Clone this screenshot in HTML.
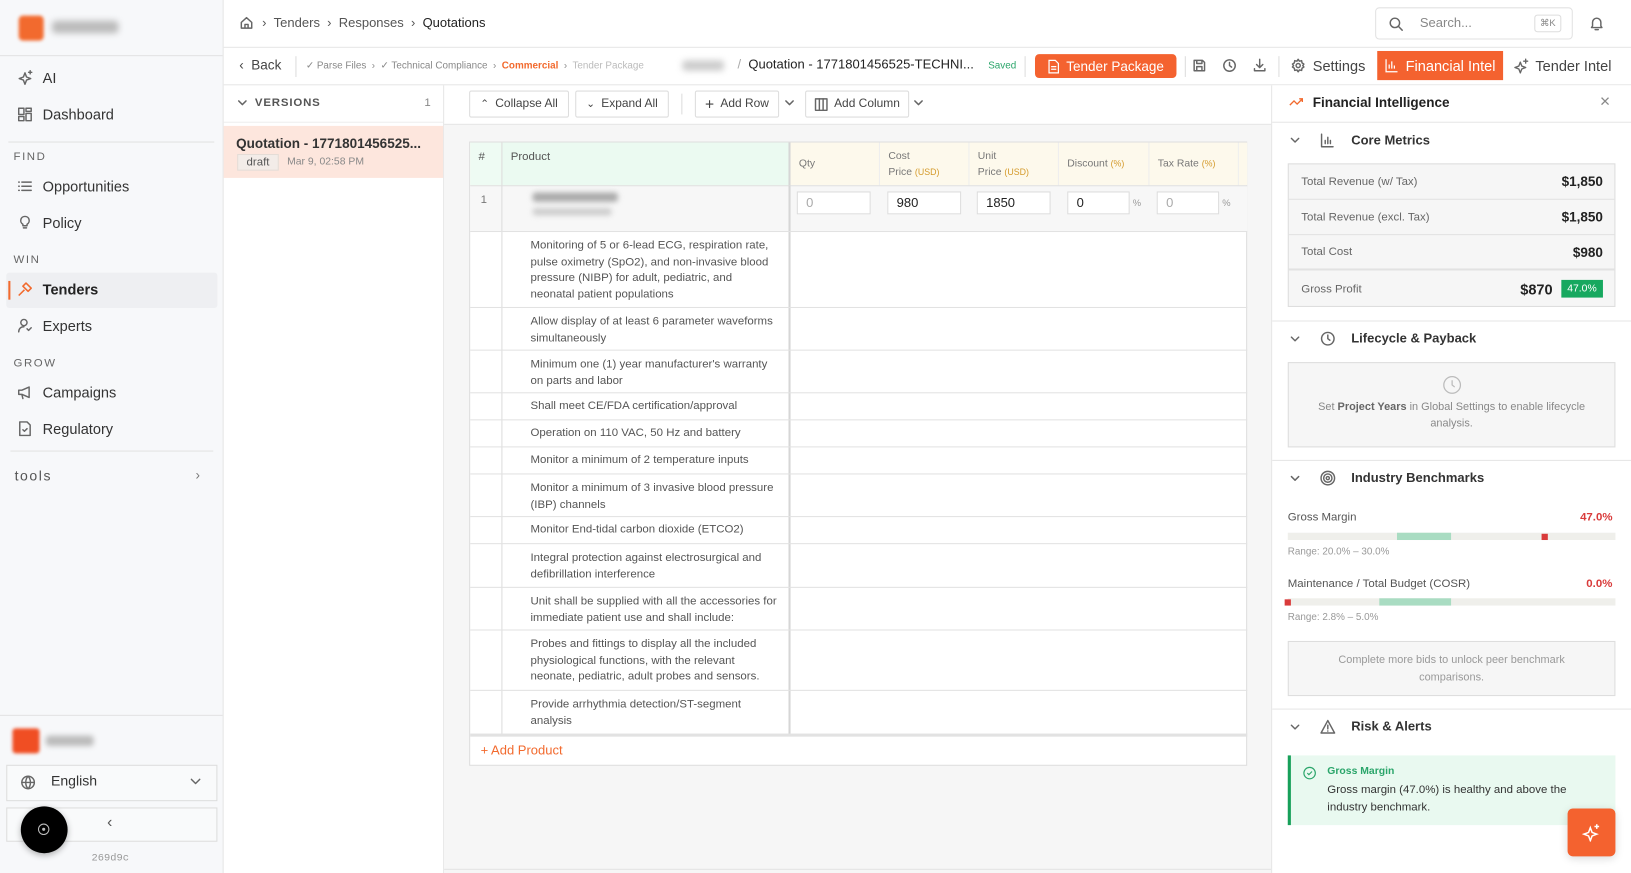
<!DOCTYPE html>
<html><head><meta charset="utf-8">
<style>
*{box-sizing:border-box;margin:0;padding:0}
html,body{width:1631px;height:873px;overflow:hidden;background:#fff;font-family:"Liberation Sans",Arial,sans-serif;color:#222}
#w{position:absolute;left:0;top:0;width:1568px;height:839px;transform:scale(1.0402,1.0405);transform-origin:0 0}
.a{position:absolute}
svg{display:block}
.ico{stroke:#666;fill:none;stroke-width:1.4;stroke-linecap:round;stroke-linejoin:round}
.nav{position:absolute;left:16px;font-size:14px;color:#333;display:flex;align-items:center;gap:9px}
.sec{position:absolute;left:13px;font-size:11px;letter-spacing:1.5px;color:#666}
.btn{position:absolute;border:1px solid #ddd;background:#fff;border-radius:2px;font-size:11.5px;color:#444;display:flex;align-items:center;justify-content:center;gap:6px}
.hc{position:absolute;top:0;height:41px;font-size:10px;color:#777;padding:6px 8px;line-height:15px;border-left:1px solid #eee}
.hc .u{color:#d49a2a;font-size:8.5px}
.inp{position:absolute;top:6px;height:22px;border:1px solid #ddd;background:#fff;font-size:12.5px;padding:3px 8px;color:#222}
.sr{position:absolute;left:0;width:747px;border-top:1px solid #e2e2e2;}
.sr .t{position:absolute;left:58px;top:6px;width:238px;font-size:11px;line-height:15.6px;color:#555}
.mr{position:absolute;left:0;width:314px;height:34px;border-bottom:1px solid #e2e2e2;font-size:11px;color:#666;padding:0 12px;display:flex;align-items:center;justify-content:space-between}
.mr b{font-size:13px;color:#222;font-weight:600}
.shd{position:absolute;left:1240px;font-size:12.5px;font-weight:bold;color:#333;display:flex;align-items:center}
</style></head><body><div id="w">

<!-- SIDEBAR -->
<div class="a" style="left:0;top:0;width:215px;height:839px;background:#f7f8fa;border-right:1px solid #e6e6e6"></div>
<div class="a" style="left:18px;top:15px;width:24px;height:24px;background:#f26a2e;border-radius:4px;filter:blur(1.5px)"></div>
<div class="a" style="left:50px;top:20px;width:64px;height:12px;background:#bbb;border-radius:4px;filter:blur(3px)"></div>
<div class="a" style="left:0;top:53px;width:214px;border-top:1px solid #e2e2e2"></div>
<div class="nav" style="top:67px"><svg width="16" height="16" class="ico" viewBox="0 0 16 16"><path d="M8 3l1.5 4 4 1.5-4 1.5L8 14l-1.5-4-4-1.5 4-1.5z"/><path d="M13 1v3M11.5 2.5h3"/></svg>AI</div>
<div class="nav" style="top:102px"><svg width="16" height="16" class="ico" viewBox="0 0 16 16"><rect x="2" y="2" width="5" height="6"/><rect x="9" y="2" width="5" height="3"/><rect x="2" y="10" width="5" height="4"/><rect x="9" y="7" width="5" height="7"/></svg>Dashboard</div>
<div class="a" style="left:8px;top:136px;width:198px;border-top:1px solid #e2e2e2"></div>
<div class="sec" style="top:145px">FIND</div>
<div class="nav" style="top:171px"><svg width="16" height="16" class="ico" viewBox="0 0 16 16"><path d="M5 4h9M5 8h9M5 12h9M2 4h.5M2 8h.5M2 12h.5"/></svg>Opportunities</div>
<div class="nav" style="top:206px"><svg width="16" height="16" class="ico" viewBox="0 0 16 16"><path d="M8 2a4 4 0 0 0-2 7.5V11h4V9.5A4 4 0 0 0 8 2zM6.5 13h3"/></svg>Policy</div>
<div class="sec" style="top:244px">WIN</div>
<div class="a" style="left:6px;top:262px;width:203px;height:34px;background:#eeeff2;border-radius:3px"></div>
<div class="a" style="left:8px;top:270px;width:2px;height:18px;background:#f26a2e"></div>
<div class="nav" style="top:270px;font-weight:bold;color:#222"><svg width="16" height="16" viewBox="0 0 16 16" fill="none" stroke="#f26a2e" stroke-width="1.5" stroke-linejoin="round"><path d="M9 2l5 5-3 3-5-5zM7.5 8.5L2 14"/></svg>Tenders</div>
<div class="nav" style="top:305px"><svg width="16" height="16" class="ico" viewBox="0 0 16 16"><circle cx="7" cy="5" r="3"/><path d="M2 14c0-3 2-5 5-5M10 11l1.5 1.5L14 10"/></svg>Experts</div>
<div class="sec" style="top:343px">GROW</div>
<div class="nav" style="top:369px"><svg width="16" height="16" class="ico" viewBox="0 0 16 16"><path d="M2 6h3l7-3v10L5 10H2zM5 10l1 4"/></svg>Campaigns</div>
<div class="nav" style="top:404px"><svg width="16" height="16" class="ico" viewBox="0 0 16 16"><path d="M3 1.5h7l3 3v10H3zM6 9l1.5 1.5L10 8"/></svg>Regulatory</div>
<div class="a" style="left:10px;top:433px;width:195px;border-top:1px solid #e2e2e2"></div>
<div class="a" style="left:14px;top:450px;font-size:13.5px;letter-spacing:1.5px;color:#555">tools</div>
<div class="a" style="left:188px;top:449px;font-size:13px;color:#777">›</div>
<div class="a" style="left:0;top:687px;width:214px;border-top:1px solid #e2e2e2"></div>
<div class="a" style="left:12px;top:700px;width:26px;height:24px;background:#f04e23;border-radius:3px;filter:blur(1.5px)"></div>
<div class="a" style="left:44px;top:707px;width:46px;height:10px;background:#bbb;border-radius:3px;filter:blur(2.5px)"></div>
<div class="a" style="left:6px;top:735px;width:203px;height:35px;border:1px solid #ddd;background:#f9fafb"></div>
<svg class="a ico" style="left:19px;top:744px" width="16" height="16" viewBox="0 0 16 16"><circle cx="8" cy="8" r="6"/><path d="M2 8h12M8 2c-3 3-3 9 0 12M8 2c3 3 3 9 0 12"/></svg>
<div class="a" style="left:49px;top:743px;font-size:13.5px;color:#333">English</div>
<svg class="a ico" style="left:182px;top:747px" width="12" height="8" viewBox="0 0 12 8"><path d="M2 2l4 4 4-4"/></svg>
<div class="a" style="left:6px;top:776px;width:203px;height:33px;border:1px solid #ddd;background:#f9fafb"></div>
<div class="a" style="left:103px;top:782px;font-size:15px;color:#555">‹</div>
<div class="a" style="left:20px;top:775px;width:45px;height:45px;border-radius:50%;background:#000;box-shadow:0 2px 6px rgba(0,0,0,.3)"></div>
<svg class="a" style="left:35px;top:790px" width="14" height="14" viewBox="0 0 14 14" fill="none" stroke="#bbb" stroke-width="1"><circle cx="7" cy="7" r="5"/><circle cx="7" cy="7" r="1" fill="#bbb"/></svg>
<div class="a" style="left:88px;top:820px;font-size:10px;color:#999;font-family:'Liberation Mono',monospace">269d9c</div>

<!-- TOP BAR -->
<div class="a" style="left:215px;top:45px;width:1353px;border-top:1px solid #e6e6e6"></div>
<svg class="a ico" style="left:230px;top:15px" width="14" height="14" viewBox="0 0 14 14"><path d="M2 6.5L7 2l5 4.5V12H2zM5.5 12V8.5h3V12"/></svg>
<div class="a" style="left:252px;top:15px;font-size:12.5px;color:#555">›&nbsp;&nbsp;Tenders&nbsp;&nbsp;›&nbsp;&nbsp;Responses&nbsp;&nbsp;›&nbsp;&nbsp;<span style="color:#222">Quotations</span></div>
<div class="a" style="left:1322px;top:7px;width:190px;height:31px;border:1px solid #e2e2e2;border-radius:4px"></div>
<svg class="a ico" style="left:1335px;top:16px" width="14" height="14" viewBox="0 0 14 14"><circle cx="6" cy="6" r="4.5"/><path d="M9.5 9.5L13 13"/></svg>
<div class="a" style="left:1365px;top:15px;font-size:12.5px;color:#888">Search...</div>
<div class="a" style="left:1475px;top:14px;width:26px;height:17px;border:1px solid #ddd;border-radius:3px;font-size:9px;color:#888;text-align:center;line-height:15px">⌘K</div>
<svg class="a ico" style="left:1528px;top:15px" width="14" height="15" viewBox="0 0 14 15"><path d="M3 10V6.5a4 4 0 0 1 8 0V10l1 1.5H2zM5.5 13.5h3"/></svg>

<!-- SUB BAR -->
<div class="a" style="left:215px;top:81px;width:1353px;border-top:1px solid #e6e6e6"></div>
<div class="a" style="left:230px;top:55px;font-size:13px;color:#444">‹&nbsp; Back</div>
<div class="a" style="left:284px;top:54px;height:20px;border-left:1px solid #ddd"></div>
<div class="a" style="left:294px;top:58px;font-size:9.5px;color:#888;white-space:nowrap">✓ Parse Files &nbsp;›&nbsp; ✓ Technical Compliance &nbsp;›&nbsp; <span style="color:#f26a2e;font-weight:bold">Commercial</span> &nbsp;›&nbsp; <span style="color:#bbb">Tender Package</span></div>
<div class="a" style="left:656px;top:58px;width:40px;height:10px;background:#ccc;border-radius:3px;filter:blur(3px)"></div>
<div class="a" style="left:709px;top:55px;font-size:12.5px;color:#222;white-space:nowrap"><span style="color:#aaa">/</span>&nbsp; Quotation - 1771801456525-TECHNI...</div>
<div class="a" style="left:950px;top:58px;font-size:9.5px;color:#2aa56a">Saved</div>
<div class="a" style="left:985px;top:54px;height:20px;border-left:1px solid #ddd"></div>
<div class="a" style="left:995px;top:52px;width:136px;height:23px;background:#f4622f;border-radius:4px;color:#fff;font-size:13px;display:flex;align-items:center;justify-content:center;gap:6px"><svg width="12" height="14" viewBox="0 0 12 14" fill="none" stroke="#fff" stroke-width="1.2"><path d="M1.5 1h6l3 3v9h-9zM3.5 7h5M3.5 9.5h5"/></svg>Tender Package</div>
<div class="a" style="left:1139px;top:54px;height:20px;border-left:1px solid #ddd"></div>
<svg class="a ico" style="left:1146px;top:56px" width="14" height="14" viewBox="0 0 14 14"><path d="M2 2h8l2 2v8H2zM4.5 2v3h5V2M4.5 12V8h5v4"/></svg>
<svg class="a ico" style="left:1175px;top:56px" width="14" height="14" viewBox="0 0 14 14"><circle cx="7" cy="7" r="5.5"/><path d="M7 4v3l2 1.5"/></svg>
<svg class="a ico" style="left:1204px;top:55px" width="14" height="15" viewBox="0 0 14 15"><path d="M7 2v8M4 7l3 3 3-3M2 11v2h10v-2"/></svg>
<div class="a" style="left:1229px;top:54px;height:20px;border-left:1px solid #ddd"></div>
<div class="a" style="left:1241px;top:55px;font-size:14px;color:#444;display:flex;gap:7px;align-items:center"><svg width="14" height="14" class="ico" viewBox="0 0 14 14"><circle cx="7" cy="7" r="2"/><path d="M7 1l1.2 1.8 2.1-.5.4 2.1 1.8 1.2L11.4 7l1.1 1.4-1.8 1.2-.4 2.1-2.1-.5L7 13l-1.2-1.8-2.1.5-.4-2.1L1.5 8.4 2.6 7 1.5 5.6l1.8-1.2.4-2.1 2.1.5z"/></svg>Settings</div>
<div class="a" style="left:1324px;top:49px;width:121px;height:28px;background:#f4622f;color:#fff;font-size:14px;display:flex;align-items:center;justify-content:center;gap:6px"><svg width="14" height="14" viewBox="0 0 14 14" fill="none" stroke="#fff" stroke-width="1.2"><path d="M1.5 1v12h11M4.5 10V6M7 10V3M9.5 10V7"/></svg>Financial Intel</div>
<div class="a" style="left:1455px;top:55px;font-size:14px;color:#444;display:flex;gap:6px;align-items:center"><svg width="15" height="15" class="ico" viewBox="0 0 16 16"><path d="M7 4l1.5 4 4 1.5-4 1.5L7 15l-1.5-4-4-1.5 4-1.5z"/><path d="M12.5 1v4M10.5 3h4"/></svg>Tender Intel</div>

<!-- VERSIONS -->
<div class="a" style="left:426px;top:82px;height:757px;border-left:1px solid #e6e6e6"></div>
<svg class="a ico" style="left:228px;top:95px" width="10" height="8" viewBox="0 0 10 8"><path d="M1.5 2l3.5 3.5L8.5 2"/></svg>
<div class="a" style="left:245px;top:93px;font-size:11px;letter-spacing:.8px;color:#555;font-weight:bold">VERSIONS</div>
<div class="a" style="left:408px;top:93px;font-size:11px;color:#888">1</div>
<div class="a" style="left:215px;top:117px;width:211px;border-top:1px solid #eee"></div>
<div class="a" style="left:215px;top:121px;width:211px;height:50px;background:#fde6dd"></div>
<div class="a" style="left:227px;top:130px;font-size:13px;font-weight:bold;color:#333">Quotation - 1771801456525...</div>
<div class="a" style="left:228px;top:148px;padding:1px 8px;background:#f3ece8;border:1px solid #e5dcd6;font-size:11px;color:#555">draft</div>
<div class="a" style="left:276px;top:150px;font-size:10px;color:#888">Mar 9, 02:58 PM</div>

<!-- MAIN -->
<div class="a" style="left:427px;top:119px;width:795px;height:720px;background:#f6f6f6"></div>
<div class="a" style="left:427px;top:119px;width:795px;border-top:1px solid #e6e6e6"></div>
<div class="a" style="left:427px;top:835px;width:795px;border-top:1px solid #e3e3e3"></div>
<div class="btn" style="left:451px;top:87px;width:96px;height:26px"><span style="font-size:10px">⌃</span>Collapse All</div>
<div class="btn" style="left:553px;top:87px;width:90px;height:26px"><span style="font-size:10px">⌄</span>Expand All</div>
<div class="a" style="left:655px;top:90px;height:20px;border-left:1px solid #ddd"></div>
<div class="btn" style="left:668px;top:87px;width:81px;height:26px"><span style="font-size:15px;font-weight:300">+</span>Add Row</div>
<svg class="a ico" style="left:754px;top:95px" width="10" height="8" viewBox="0 0 10 8"><path d="M1.5 2l3.5 3.5L8.5 2"/></svg>
<div class="btn" style="left:774px;top:87px;width:100px;height:26px"><svg width="13" height="13" class="ico" viewBox="0 0 13 13"><rect x="1" y="1" width="11" height="11"/><path d="M4.7 1v11M8.3 1v11"/></svg>Add Column</div>
<svg class="a ico" style="left:878px;top:95px" width="10" height="8" viewBox="0 0 10 8"><path d="M1.5 2l3.5 3.5L8.5 2"/></svg>

<!-- TABLE -->
<div class="a" style="left:451px;top:136px;width:748px;height:600px;background:#fff;border:1px solid #ddd">
 <div class="a" style="left:0;top:0;width:747px;height:41px;background:#fdf9ec"></div>
 <div class="a" style="left:0;top:0;width:30px;height:41px;background:#eefbf3"></div>
 <div class="a" style="left:30px;top:0;width:276px;height:41px;background:#ebfaf1;border-left:1px solid #dcdcdc"></div>
 <div class="a" style="left:8px;top:8px;font-size:11px;color:#555">#</div>
 <div class="a" style="left:39px;top:8px;font-size:11px;color:#555">Product</div>
 <div class="hc" style="left:306px;width:87px;border-left:2px solid #d6d6d6;padding-top:13px">Qty</div>
 <div class="hc" style="left:393px;width:86px">Cost<br>Price <span class="u">(USD)</span></div>
 <div class="hc" style="left:479px;width:86px">Unit<br>Price <span class="u">(USD)</span></div>
 <div class="hc" style="left:565px;width:87px;padding-top:13px">Discount <span class="u">(%)</span></div>
 <div class="hc" style="left:652px;width:86px;padding-top:13px">Tax Rate <span class="u">(%)</span></div>
 <div class="hc" style="left:738px;width:10px"></div>
 <!-- row1 -->
 <div class="a" style="left:0;top:41px;width:747px;height:44px;background:#f7f7f7;border-top:1px solid #e0e0e0"></div>
 <div class="a" style="left:30px;top:41px;height:44px;border-left:1px solid #dcdcdc"></div>
 <div class="a" style="left:10px;top:49px;font-size:11px;color:#777">1</div>
 <div class="a" style="left:60px;top:48px;width:82px;height:9px;background:#aaa;border-radius:3px;filter:blur(2.5px)"></div>
 <div class="a" style="left:60px;top:63px;width:76px;height:7px;background:#ccc;border-radius:3px;filter:blur(2.5px)"></div>
 <div class="a" style="left:306px;top:41px;height:44px;border-left:2px solid #d6d6d6"></div>
 <div class="inp" style="left:314px;top:47px;width:71px;color:#aaa">0</div>
 <div class="inp" style="left:401px;top:47px;width:71px">980</div>
 <div class="inp" style="left:487px;top:47px;width:71px">1850</div>
 <div class="inp" style="left:574px;top:47px;width:60px">0</div><div class="a" style="left:637px;top:53px;font-size:9px;color:#999">%</div>
 <div class="inp" style="left:660px;top:47px;width:60px;color:#aaa">0</div><div class="a" style="left:723px;top:53px;font-size:9px;color:#999">%</div>
 <!-- spec rows -->
 <div class="a" style="left:30px;top:85px;height:484px;border-left:1px solid #dcdcdc"></div>
 <div class="a" style="left:306px;top:85px;height:484px;border-left:2px solid #d6d6d6"></div>
 <div class="sr" style="top:85px"><div class="t">Monitoring of 5 or 6-lead ECG, respiration rate, pulse oximetry (SpO2), and non-invasive blood pressure (NIBP) for adult, pediatric, and neonatal patient populations</div></div>
 <div class="sr" style="top:158px"><div class="t">Allow display of at least 6 parameter waveforms simultaneously</div></div>
 <div class="sr" style="top:199px"><div class="t">Minimum one (1) year manufacturer's warranty on parts and labor</div></div>
 <div class="sr" style="top:240px"><div class="t" style="top:5px">Shall meet CE/FDA certification/approval</div></div>
 <div class="sr" style="top:266px"><div class="t" style="top:5px">Operation on 110 VAC, 50 Hz and battery</div></div>
 <div class="sr" style="top:292px"><div class="t" style="top:5px">Monitor a minimum of 2 temperature inputs</div></div>
 <div class="sr" style="top:318px"><div class="t">Monitor a minimum of 3 invasive blood pressure (IBP) channels</div></div>
 <div class="sr" style="top:359px"><div class="t" style="top:5px">Monitor End-tidal carbon dioxide (ETCO2)</div></div>
 <div class="sr" style="top:385px"><div class="t">Integral protection against electrosurgical and defibrillation interference</div></div>
 <div class="sr" style="top:427px"><div class="t">Unit shall be supplied with all the accessories for immediate patient use and shall include:</div></div>
 <div class="sr" style="top:468px"><div class="t">Probes and fittings to display all the included physiological functions, with the relevant neonate, pediatric, adult probes and sensors.</div></div>
 <div class="sr" style="top:526px"><div class="t">Provide arrhythmia detection/ST-segment analysis</div></div>
 <div class="sr" style="top:568px;border-top:3px solid #e2e2e2"></div>
 <div class="a" style="left:10px;top:577px;font-size:12.5px;color:#f26a2e">+ Add Product</div>
</div>

<!-- RIGHT PANEL -->
<div class="a" style="left:1222px;top:82px;width:346px;height:757px;border-left:1px solid #e6e6e6;background:#fff"></div>
<svg class="a" style="left:1239px;top:93px" width="15" height="10" viewBox="0 0 15 10" fill="none" stroke="#f26a2e" stroke-width="1.3"><path d="M1 8l4-4 3 3 5-5M10 2h3v3"/></svg>
<div class="a" style="left:1262px;top:91px;font-size:13px;font-weight:bold;color:#222">Financial Intelligence</div>
<div class="a" style="left:1538px;top:88px;font-size:17px;color:#888">×</div>
<div class="a" style="left:1223px;top:117px;width:345px;border-top:1px solid #e6e6e6"></div>

<svg class="a ico" style="left:1240px;top:131px" width="10" height="8" viewBox="0 0 10 8"><path d="M1.5 2l3.5 3.5L8.5 2"/></svg>
<svg class="a ico" style="left:1269px;top:128px" width="14" height="14" viewBox="0 0 14 14"><path d="M1.5 1v12h11M5 10V7M7.5 10V4M10 10V7"/></svg>
<div class="shd" style="left:1299px;top:128px">Core Metrics</div>
<div class="a" style="left:1238px;top:157px;width:315px;height:138px;border:1px solid #ddd;background:#f6f6f6">
 <div class="mr" style="top:0">Total Revenue (w/ Tax)<b>$1,850</b></div>
 <div class="mr" style="top:34px">Total Revenue (excl. Tax)<b>$1,850</b></div>
 <div class="mr" style="top:68px;border-bottom:2px solid #e2e2e2">Total Cost<b>$980</b></div>
 <div class="mr" style="top:102px;border:0;height:35px">Gross Profit<span style="display:flex;align-items:center;gap:8px"><b style="font-size:14px">$870</b><span style="background:#17a85f;color:#fff;font-size:10px;padding:3px 6px">47.0%</span></span></div>
</div>
<div class="a" style="left:1223px;top:308px;width:345px;border-top:1px solid #e6e6e6"></div>

<svg class="a ico" style="left:1240px;top:322px" width="10" height="8" viewBox="0 0 10 8"><path d="M1.5 2l3.5 3.5L8.5 2"/></svg>
<svg class="a ico" style="left:1269px;top:318px" width="15" height="15" viewBox="0 0 15 15"><circle cx="7.5" cy="7.5" r="6"/><path d="M7.5 4v3.5l2 1.5"/></svg>
<div class="shd" style="left:1299px;top:318px">Lifecycle &amp; Payback</div>
<div class="a" style="left:1238px;top:348px;width:315px;height:82px;border:1px solid #ddd;background:#f6f6f6;text-align:center">
 <svg style="margin:12px auto 0" width="18" height="18" viewBox="0 0 18 18" fill="none" stroke="#bbb" stroke-width="1.2"><circle cx="9" cy="9" r="8"/><path d="M9 4.5V9l2.5 2"/></svg>
 <div style="font-size:10.5px;color:#888;line-height:16px;margin-top:4px;padding:0 10px">Set <b style="color:#666">Project Years</b> in Global Settings to enable lifecycle analysis.</div>
</div>
<div class="a" style="left:1223px;top:442px;width:345px;border-top:1px solid #e6e6e6"></div>

<svg class="a ico" style="left:1240px;top:456px" width="10" height="8" viewBox="0 0 10 8"><path d="M1.5 2l3.5 3.5L8.5 2"/></svg>
<svg class="a ico" style="left:1269px;top:452px" width="15" height="15" viewBox="0 0 15 15"><circle cx="7.5" cy="7.5" r="6.5"/><circle cx="7.5" cy="7.5" r="4"/><circle cx="7.5" cy="7.5" r="1.5"/></svg>
<div class="shd" style="left:1299px;top:452px">Industry Benchmarks</div>
<div class="a" style="left:1238px;top:491px;font-size:11px;color:#555">Gross Margin</div>
<div class="a" style="left:1519px;top:491px;font-size:11px;color:#d93b3b;font-weight:bold">47.0%</div>
<div class="a" style="left:1238px;top:512px;width:315px;height:7px;background:#efefeb"></div>
<div class="a" style="left:1343px;top:512px;width:52px;height:7px;background:#a9dcc2"></div>
<div class="a" style="left:1482px;top:513px;width:6px;height:6px;background:#d93b3b"></div>
<div class="a" style="left:1238px;top:525px;font-size:9.5px;color:#999">Range: 20.0% – 30.0%</div>
<div class="a" style="left:1238px;top:555px;font-size:11px;color:#555">Maintenance / Total Budget (COSR)</div>
<div class="a" style="left:1525px;top:555px;font-size:11px;color:#d93b3b;font-weight:bold">0.0%</div>
<div class="a" style="left:1238px;top:575px;width:315px;height:7px;background:#efefeb"></div>
<div class="a" style="left:1326px;top:575px;width:69px;height:7px;background:#a9dcc2"></div>
<div class="a" style="left:1235px;top:576px;width:6px;height:6px;background:#d93b3b"></div>
<div class="a" style="left:1238px;top:588px;font-size:9.5px;color:#999">Range: 2.8% – 5.0%</div>
<div class="a" style="left:1238px;top:616px;width:315px;height:53px;border:1px solid #ddd;background:#f6f6f6;font-size:10.5px;color:#999;text-align:center;line-height:17px;padding-top:9px">Complete more bids to unlock peer benchmark<br>comparisons.</div>
<div class="a" style="left:1223px;top:681px;width:345px;border-top:1px solid #e6e6e6"></div>

<svg class="a ico" style="left:1240px;top:695px" width="10" height="8" viewBox="0 0 10 8"><path d="M1.5 2l3.5 3.5L8.5 2"/></svg>
<svg class="a ico" style="left:1269px;top:691px" width="15" height="15" viewBox="0 0 15 15"><path d="M7.5 1.5L14 13.5H1zM7.5 6v3.5M7.5 11.5v.2"/></svg>
<div class="shd" style="left:1299px;top:691px">Risk &amp; Alerts</div>
<div class="a" style="left:1238px;top:726px;width:315px;height:67px;background:#e9f9f0;border-left:3px solid #17a05a"></div>
<svg class="a" style="left:1252px;top:736px" width="14" height="14" viewBox="0 0 14 14" fill="none" stroke="#2aa56a" stroke-width="1.1"><circle cx="7" cy="7" r="5.5"/><path d="M4.8 7l1.5 1.5 3-3"/></svg>
<div class="a" style="left:1276px;top:736px;font-size:10px;color:#2aa56a;font-weight:bold">Gross Margin</div>
<div class="a" style="left:1276px;top:751px;width:270px;font-size:11px;color:#333;line-height:16.5px">Gross margin (47.0%) is healthy and above the industry benchmark.</div>
<div class="a" style="left:1507px;top:777px;width:46px;height:46px;background:#f4622f;border-radius:5px;box-shadow:0 2px 8px rgba(0,0,0,.15)"></div>
<svg class="a" style="left:1521px;top:791px" width="18" height="18" viewBox="0 0 16 16" fill="none" stroke="#fff" stroke-width="1.3"><path d="M7 4l1.5 4 4 1.5-4 1.5L7 15l-1.5-4-4-1.5 4-1.5z"/><path d="M12.5 1v4M10.5 3h4"/></svg>

</div></body></html>
